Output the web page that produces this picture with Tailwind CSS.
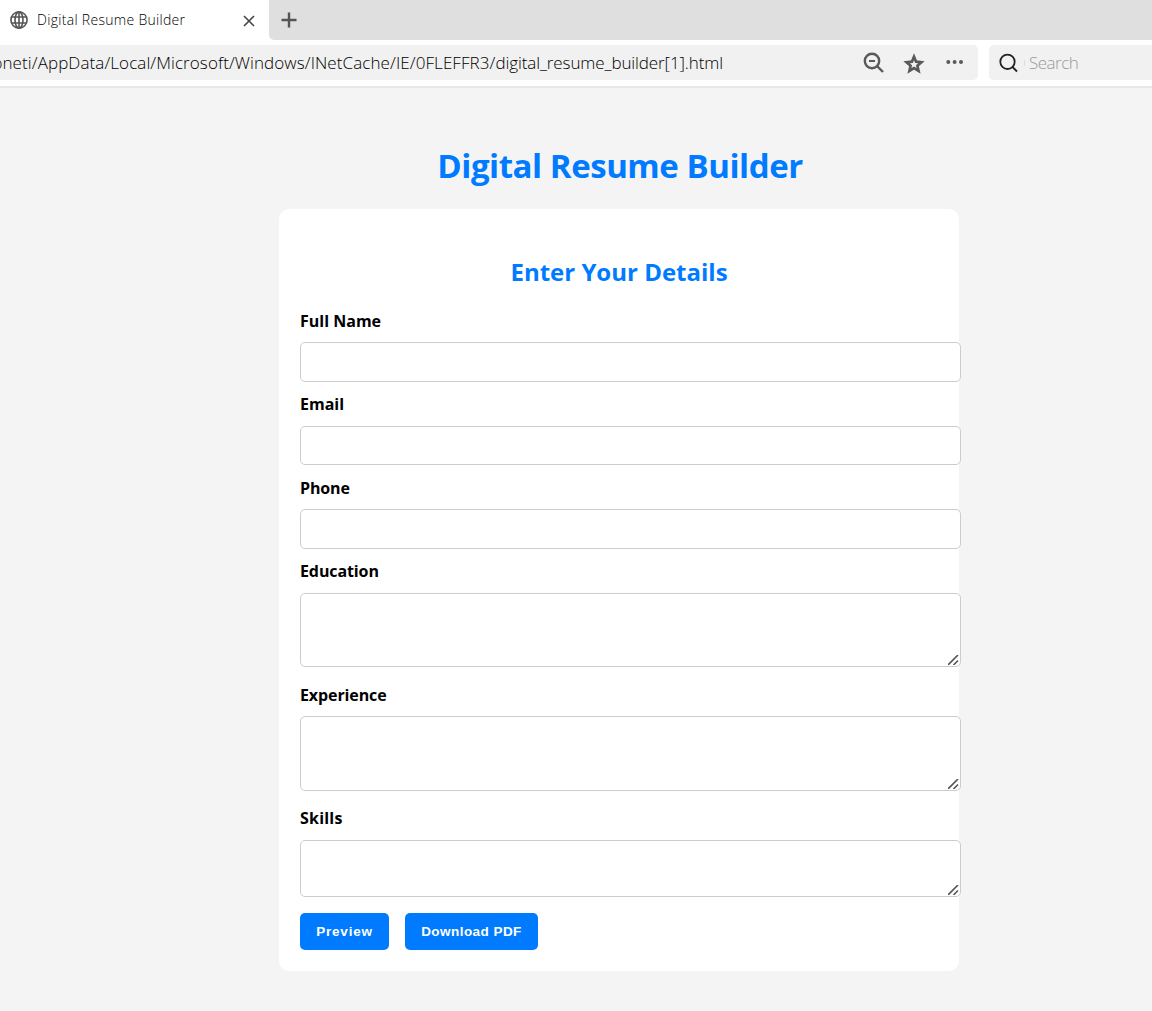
<!DOCTYPE html>
<html lang="en">
<head>
<meta charset="utf-8">
<title>Digital Resume Builder</title>
<script src="https://cdn.jsdelivr.net/npm/@tailwindcss/browser@4"></script>
</head>
<body class="w-[1152px] h-[1011px] overflow-hidden bg-[#f4f4f4] font-['Open_Sans',sans-serif] text-black">
<header class="h-[88px] bg-white border-b-2 border-[#e3e8eb]">
  <div class="flex h-10 bg-white">
    <div class="flex items-center w-[269px] pl-2.5 pr-3.5">
      <svg class="w-[18px] h-[18px]" viewBox="0 0 18 18" fill="none" stroke="#555" stroke-width="1.6"><circle cx="9" cy="9" r="8.1"/><ellipse cx="9" cy="9" rx="4" ry="8.1"/><path d="M9 1v16M1.6 6h14.8M1.6 12h14.8"/></svg>
      <span class="ml-[9px] -mt-px text-[14px] font-light tracking-[0.3px] whitespace-nowrap text-black">Digital Resume Builder</span>
      <svg class="ml-auto mt-0.5 w-3 h-3" viewBox="0 0 12 12" stroke="#444" stroke-width="1.6"><path d="M1 1l10 10M11 1L1 11"/></svg>
    </div>
    <div class="flex items-center flex-1 pl-3 bg-[#dfdfdf] rounded-bl-[5px]">
      <svg class="w-4 h-4" viewBox="0 0 16 16" stroke="#555" stroke-width="2.4"><path d="M8 .5v15M.5 8h15"/></svg>
    </div>
  </div>
  <div class="flex gap-[11px] pt-[5px]">
    <div class="flex items-center w-[978px] h-[35px] bg-[#f1f1f1] rounded-r-[5px] overflow-hidden">
      <div class="flex justify-end w-[723px] whitespace-nowrap text-[17px] font-light text-black"><span class="tracking-[0.09px]">oneti/AppData/Local/Microsoft/Windows/INetCache/IE/0FLEFFR3/</span><span class="tracking-[-0.1px]">digital_resume_builder[1].html</span></div>
      <svg class="ml-[140px] w-[22px] h-[22px] shrink-0" viewBox="0 0 22 22" fill="none" stroke="#5a5a5a" stroke-width="2.4"><circle cx="9" cy="9" r="7.2"/><path d="M14 14l6 6"/><path d="M6 9h6" stroke-width="1.8"/></svg>
      <svg class="ml-[18px] mt-0.5 w-[22px] h-[22px] shrink-0" viewBox="0 0 22 22" fill="none" stroke="#5a5a5a" stroke-width="2.7"><path d="M11 3.7l2.1 5 5.300.5-4 3.500 1.200 5.300-4.600-2.800-4.600 2.800 1.200-5.300-4-3.500 5.300-.5z"/></svg>
      <svg class="ml-[20px] mb-1 w-5 h-5 shrink-0" viewBox="0 0 20 20" fill="#5a5a5a"><circle cx="3.300" cy="11" r="2"/><circle cx="9.600" cy="11" r="2"/><circle cx="16" cy="11" r="2"/></svg>
    </div>
    <div class="flex items-center flex-1 h-[35px] pl-2.5 bg-[#f1f1f1] rounded-l-[5px]">
      <svg class="w-5 h-5" viewBox="0 0 20 20" fill="none" stroke="#222" stroke-width="1.8"><circle cx="8.500" cy="8.800" r="7.200"/><path d="M13.500 14l4.500 4.500"/></svg>
      <span class="ml-[5px] h-1.5 w-px bg-[#ddd]"></span>
      <span class="ml-[4px] text-[17px] font-light tracking-[-0.5px] text-[#999]">Search</span>
    </div>
  </div>
</header>
<main class="flex flex-col items-start pl-[279px]">
  <h1 class="flex items-center justify-center w-[682px] h-[121px] pt-[35px] text-[33px] font-bold tracking-[-0.45px] text-[#007bff] whitespace-nowrap">Digital Resume Builder</h1>
  <form class="flex flex-col w-[680px] h-[762px] px-[21px] pt-[38px] bg-white rounded-[10px]">
    <h2 class="flex items-center justify-center h-[51px] pb-0.5 text-[24px] font-bold text-[#007bff] whitespace-nowrap">Enter Your Details</h2>
    <label for="name" class="flex items-center h-11 text-[16px] font-bold pt-0.5">Full Name</label>
    <input id="name" class="w-[661px] h-10 bg-white border border-[#ccc] rounded-[5px]">
    <label for="email" class="flex items-center h-11 text-[16px] font-bold">Email</label>
    <input id="email" class="w-[661px] h-[39px] bg-white border border-[#ccc] rounded-[5px]">
    <label for="phone" class="flex items-center h-11 text-[16px] font-bold pt-0.5 tracking-[-0.15px]">Phone</label>
    <input id="phone" class="w-[661px] h-10 bg-white border border-[#ccc] rounded-[5px]">
    <label for="edu" class="flex items-center h-11 text-[16px] font-bold tracking-[-0.1px]">Education</label>
    <div class="flex items-end justify-end w-[661px] h-[74px] pr-px pb-px bg-white border border-[#ccc] rounded-[5px]">
      <svg class="w-[11px] h-[10px]" viewBox="0 0 11 10" stroke="#555" stroke-width="1.6"><path d="M0 10L10 0M5.500 10L10 5.500"/></svg>
    </div>
    <label for="exp" class="flex items-center h-11 mt-[5px] text-[16px] font-bold pt-0.5 tracking-[-0.1px]">Experience</label>
    <div class="flex items-end justify-end w-[661px] h-[75px] pr-px pb-px bg-white border border-[#ccc] rounded-[5px]">
      <svg class="w-[11px] h-[10px]" viewBox="0 0 11 10" stroke="#555" stroke-width="1.6"><path d="M0 10L10 0M5.500 10L10 5.500"/></svg>
    </div>
    <label for="skills" class="flex items-center h-11 mt-[5px] text-[16px] font-bold tracking-[0.2px]">Skills</label>
    <div class="flex items-end justify-end w-[661px] h-[57px] pr-px pb-px bg-white border border-[#ccc] rounded-[5px]">
      <svg class="w-[11px] h-[10px]" viewBox="0 0 11 10" stroke="#555" stroke-width="1.6"><path d="M0 10L10 0M5.500 10L10 5.500"/></svg>
    </div>
    <div class="flex gap-4 mt-4 font-['Liberation_Sans',sans-serif] text-[13.5px] font-bold text-white">
      <button type="button" class="w-[89px] h-[37px] pt-px bg-[#007bff] rounded-[5px] whitespace-nowrap tracking-[0.8px]">Preview</button>
      <button type="button" class="w-[133px] h-[37px] pt-px bg-[#007bff] rounded-[5px] whitespace-nowrap tracking-[0.45px]">Download PDF</button>
    </div>
  </form>
</main>
</body>
</html>
